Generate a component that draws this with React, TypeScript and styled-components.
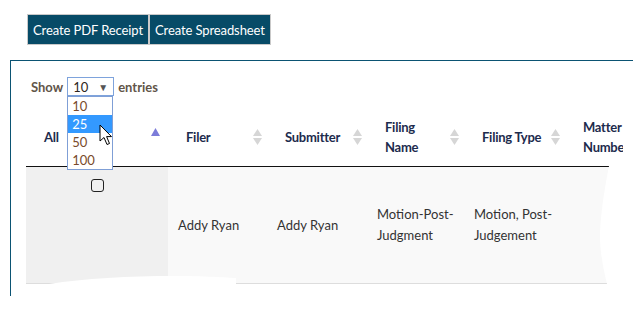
import styled, { createGlobalStyle } from "styled-components";

const GlobalStyle = createGlobalStyle`
  body {
    margin: 0;
    overflow: hidden;
    background: #fff;
    font-family: Lato, "Open Sans", sans-serif;
  }
`;

type Column = { label: string[]; sort: "asc" | "both" | "none"; width: number };

const columns: Column[] = [
  { label: ["All"], sort: "asc", width: 142 },
  { label: ["Filer"], sort: "both", width: 99 },
  { label: ["Submitter"], sort: "both", width: 100 },
  { label: ["Filing", "Name"], sort: "both", width: 97 },
  { label: ["Filing Type"], sort: "both", width: 101 },
  { label: ["Matter", "Number"], sort: "none", width: 110 },
];

const row = ["", "Addy Ryan", "Addy Ryan", "Motion-Post-Judgment", "Motion, Post-Judgement", ""];

const App = () => {
  return (
    <Page>
      <GlobalStyle />
      <Toolbar>
        <ActionBtn>Create PDF Receipt</ActionBtn>
        <ActionBtn>Create Spreadsheet</ActionBtn>
      </Toolbar>
      <Panel>
        <LengthRow>
          Show
          <SelectWrap>
            <SelectBox>
              <span>10</span>
              <Caret>▼</Caret>
            </SelectBox>
            <Options>
              <Option>10</Option>
              <Option $active>25</Option>
              <Option>50</Option>
              <Option>100</Option>
            </Options>
            <Cursor width="16" height="23" viewBox="0 0 16 23">
              <path
                d="M1 1 L1 17 L5 13.5 L8 20.5 L10.5 19.5 L7.6 12.6 L12.5 12.6 Z"
                fill="#fff"
                stroke="#000"
                strokeWidth="1"
                strokeLinejoin="round"
              />
            </Cursor>
          </SelectWrap>
          entries
        </LengthRow>
        <TableWrap>
          <Table>
            <colgroup>
              {columns.map((c, i) => (
                <col key={i} style={{ width: c.width }} />
              ))}
            </colgroup>
            <thead>
              <tr>
                {columns.map((c, i) => (
                  <Th key={i}>
                    {c.label.map((l, j) => (
                      <div key={j}>{l}</div>
                    ))}
                    {c.sort === "asc" && (
                      <SortAsc width="9" height="8" viewBox="0 0 9 8">
                        <path d="M4.5 0 L9 8 L0 8 Z" fill="#7c7cd9" />
                      </SortAsc>
                    )}
                    {c.sort === "both" && (
                      <SortBoth width="9" height="16" viewBox="0 0 9 16">
                        <path d="M4.5 0 L9 7 L0 7 Z" fill="#d6d6d6" />
                        <path d="M0 9 L9 9 L4.5 16 Z" fill="#d6d6d6" />
                      </SortBoth>
                    )}
                  </Th>
                ))}
              </tr>
            </thead>
            <tbody>
              <tr>
                {row.map((v, i) => (
                  <Td key={i} $first={i === 0}>
                    {i === 0 ? <CheckBox /> : v}
                  </Td>
                ))}
              </tr>
            </tbody>
          </Table>
          <TornEdge width="597" height="40" viewBox="0 0 597 40">
            <path d="M0 24 C40 16 90 12 150 12 C185 12 205 14 210 14 L210 40 L0 40 Z" fill="#fff" />
            <path d="M0 26 L30 21 L30 40 L0 40 Z" fill="#f5f5f5" />
          </TornEdge>
          <TornSide width="26" height="140" viewBox="0 0 26 140">
            <path d="M26 0 L12 0 C6 30 3 55 3 70 C3 90 8 110 12 126 L12 140 L26 140 Z" fill="#fff" />
          </TornSide>
        </TableWrap>
      </Panel>
    </Page>
  );
};

const Page = styled.div`
  padding-top: 14px;
  width: 700px;
`;

const Toolbar = styled.div`
  display: flex;
  margin-left: 27px;
`;

const ActionBtn = styled.button`
  height: 31px;
  padding: 0 5px;
  background: #074b67;
  color: #fff;
  border: 1px solid #c9c9c9;
  font-family: Lato, "Open Sans", sans-serif;
  font-size: 13px;
  letter-spacing: -0.1px;
  cursor: pointer;
`;

const Panel = styled.div`
  margin-top: 15px;
  margin-left: 10px;
  border-top: 1px solid #0b5373;
  border-left: 1px solid #0b5373;
  padding: 16px 0 11px 15px;
  width: 607px;
  height: 208px;
`;

const LengthRow = styled.div`
  display: flex;
  align-items: center;
  gap: 4px;
  margin-left: 5px;
  font-size: 13px;
  font-weight: 700;
  color: #625549;
  height: 19px;
`;

const SelectWrap = styled.div`
  position: relative;
`;

const SelectBox = styled.div`
  box-sizing: border-box;
  width: 47px;
  height: 19px;
  border: 1px solid #7ea3dc;
  display: flex;
  align-items: center;
  justify-content: space-between;
  padding: 0 5px;
  color: #2e2620;
  font-weight: 400;
`;

const Caret = styled.span`
  font-size: 10px;
  color: #555;
`;

const Options = styled.div`
  position: absolute;
  top: 19px;
  left: 0;
  width: 46px;
  box-sizing: border-box;
  border: 1px solid #7f9fd6;
  background: #fff;
  z-index: 3;
`;

const Option = styled.div<{ $active?: boolean }>`
  height: 18px;
  line-height: 18px;
  padding-left: 4px;
  font-weight: 400;
  font-size: 13px;
  background: ${({ $active }) => ($active ? "#3399ff" : "#fff")};
  color: ${({ $active }) => ($active ? "#fff" : "#7a4a2a")};
`;

const Cursor = styled.svg`
  position: absolute;
  left: 32px;
  top: 47px;
  z-index: 4;
`;

const TableWrap = styled.div`
  position: relative;
  margin-top: 11px;
  width: 597px;
  overflow: hidden;
`;

const Table = styled.table`
  table-layout: fixed;
  border-collapse: collapse;
  width: 649px;
`;

const Th = styled.th`
  position: relative;
  text-align: left;
  vertical-align: middle;
  padding: 10px 18px 9px;
  font-size: 13px;
  font-weight: 700;
  line-height: 20px;
  letter-spacing: -0.25px;
  color: #1d2b4d;
  border-bottom: 1px solid #111;
  white-space: nowrap;
`;

const SortAsc = styled.svg`
  position: absolute;
  right: 8px;
  top: 21px;
`;

const SortBoth = styled.svg`
  position: absolute;
  right: 5px;
  top: 50%;
  transform: translateY(-50%);
`;

const Td = styled.td<{ $first?: boolean }>`
  height: 96px;
  padding: 10px;
  font-size: 13px;
  line-height: 21px;
  color: #333;
  vertical-align: ${({ $first }) => ($first ? "top" : "middle")};
  text-align: ${({ $first }) => ($first ? "center" : "left")};
  background: ${({ $first }) => ($first ? "#f0f0f0" : "#f9f9f9")};
  border-bottom: 1px solid #dddddd;
`;

const CheckBox = styled.span`
  display: inline-block;
  width: 11px;
  height: 11px;
  border: 1.5px solid #222;
  border-radius: 3px;
`;

const TornEdge = styled.svg`
  position: absolute;
  left: 0;
  bottom: -20px;
`;

const TornSide = styled.svg`
  position: absolute;
  right: 0;
  top: 59px;
`;

export default App;
